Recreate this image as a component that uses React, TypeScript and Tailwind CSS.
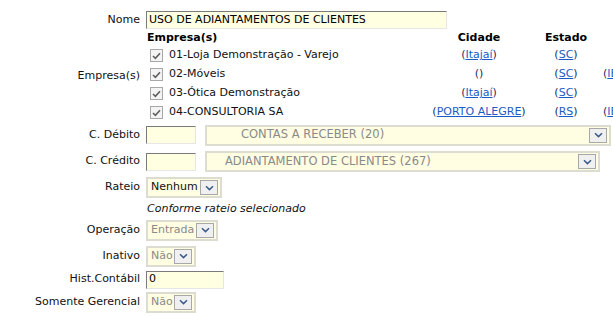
import React from 'react';

const font = "font-['DejaVu_Sans',Verdana,sans-serif]";

function Chevron() {
  return (
    <svg width="9" height="6" viewBox="0 0 9 6">
      <path d="M1 1.2 L4.5 4.6 L8 1.2" fill="none" stroke="#3b5b8c" strokeWidth="1.5" />
    </svg>
  );
}

function Select({ text, width, disabled, pad }: { text: string; width: string; disabled?: boolean; pad?: string }) {
  return (
    <div className={`${width} h-[21px] flex items-center border-2 border-[#dcdcd0] bg-[#fffde2] pr-[2px] ${pad ?? 'pl-[3px]'}`}>
      <span className={`flex-1 truncate ${pad ? 'text-[11.5px]' : 'text-[11px]'} ${disabled ? 'text-[#8a8a8a]' : 'text-[#111]'}`}>{text}</span>
      <span className="w-[18px] h-[15px] flex items-center justify-center bg-[#f0f0f0] border border-[#a8a8a8] shrink-0">
        <Chevron />
      </span>
    </div>
  );
}

function Input({ value, width }: { value: string; width: string }) {
  return (
    <div className={`${width} h-[18px] bg-[#ffffe1] border border-t-[#7a7a7a] border-l-[#7a7a7a] border-r-[#e6e6e6] border-b-[#e6e6e6] flex items-center pl-[2px] text-[11px] text-black`}>
      {value}
    </div>
  );
}

function Check() {
  return (
    <span className="w-[13px] h-[13px] border border-[#a8a8a8] bg-[#f4f4f4] flex items-center justify-center shrink-0">
      <svg width="9" height="8" viewBox="0 0 9 8">
        <path d="M1 4 L3.4 6.4 L8 1.2" fill="none" stroke="#5f5f5f" strokeWidth="1.6" />
      </svg>
    </span>
  );
}

function Link({ text }: { text: string }) {
  return (
    <span className="text-[#17305c]">
      (<span className="text-[#1b5cc4] underline">{text}</span>)
    </span>
  );
}

const empresas = [
  { nome: '01-Loja Demonstração - Varejo', cidade: 'Itajaí', estado: 'SC', extra: '' },
  { nome: '02-Móveis', cidade: '', estado: 'SC', extra: 'IE' },
  { nome: '03-Ótica Demonstração', cidade: 'Itajaí', estado: 'SC', extra: '' },
  { nome: '04-CONSULTORIA SA', cidade: 'PORTO ALEGRE', estado: 'RS', extra: 'IE' },
];

function Label({ children }: { children: React.ReactNode }) {
  return <div className="text-right text-[11px] text-[#111] pr-[6px] flex items-center justify-end">{children}</div>;
}

export default function App() {
  return (
    <div className={`${font} w-[613px] h-[316px] overflow-hidden bg-white`}>
      <div className="grid grid-cols-[146px_auto] pt-[11px]">
        <Label>Nome</Label>
        <div className="h-[19px]">
          <Input value="USO DE ADIANTAMENTOS DE CLIENTES" width="w-[301px]" />
        </div>

        <Label>Empresa(s)</Label>
        <div className="w-[520px]">
          <div className="grid grid-cols-[270px_126px_48px_60px] text-[11px] font-bold h-[15px] leading-[14px] mt-[1px]">
            <span className="pl-[1px]">Empresa(s)</span>
            <span className="text-center">Cidade</span>
            <span className="text-center">Estado</span>
            <span></span>
          </div>
          {empresas.map((e) => (
            <div key={e.nome} className="grid grid-cols-[270px_126px_48px_60px] items-center h-[19px] text-[11px]">
              <span className="flex items-center gap-[6px] pl-[4px] text-[#111]">
                <Check />
                {e.nome}
              </span>
              <span className="text-center">
                {e.cidade ? <Link text={e.cidade} /> : <span className="text-[#17305c]">()</span>}
              </span>
              <span className="text-center">
                <Link text={e.estado} />
              </span>
              <span className="pl-[13px]">{e.extra && <Link text={e.extra} />}</span>
            </div>
          ))}
        </div>

        <Label>C. Débito</Label>
        <div className="flex items-center gap-[9px] h-[26px]">
          <Input value="" width="w-[50px]" />
          <Select text="CONTAS A RECEBER (20)" width="w-[406px]" disabled pad="pl-[34px]" />
        </div>

        <Label>C. Crédito</Label>
        <div className="flex items-center gap-[9px] h-[27px]">
          <Input value="" width="w-[50px]" />
          <Select text="ADIANTAMENTO DE CLIENTES (267)" width="w-[395px]" disabled pad="pl-[18px]" />
        </div>

        <Label>Rateio</Label>
        <div className="flex items-center h-[25px]">
          <Select text="Nenhum" width="w-[76px]" />
        </div>

        <div></div>
        <div className="text-[11px] italic text-[#111] h-[17px] leading-[17px] pl-[1px]">Conforme rateio selecionado</div>

        <Label>Operação</Label>
        <div className="flex items-center h-[26px]">
          <Select text="Entrada" width="w-[72px]" disabled />
        </div>

        <Label>Inativo</Label>
        <div className="flex items-center h-[26px]">
          <Select text="Não" width="w-[50px]" disabled />
        </div>

        <Label>Hist.Contábil</Label>
        <div className="flex items-center h-[21px]">
          <Input value="0" width="w-[78px]" />
        </div>

        <Label>Somente Gerencial</Label>
        <div className="flex items-center h-[24px]">
          <Select text="Não" width="w-[50px]" disabled />
        </div>
      </div>
    </div>
  );
}
